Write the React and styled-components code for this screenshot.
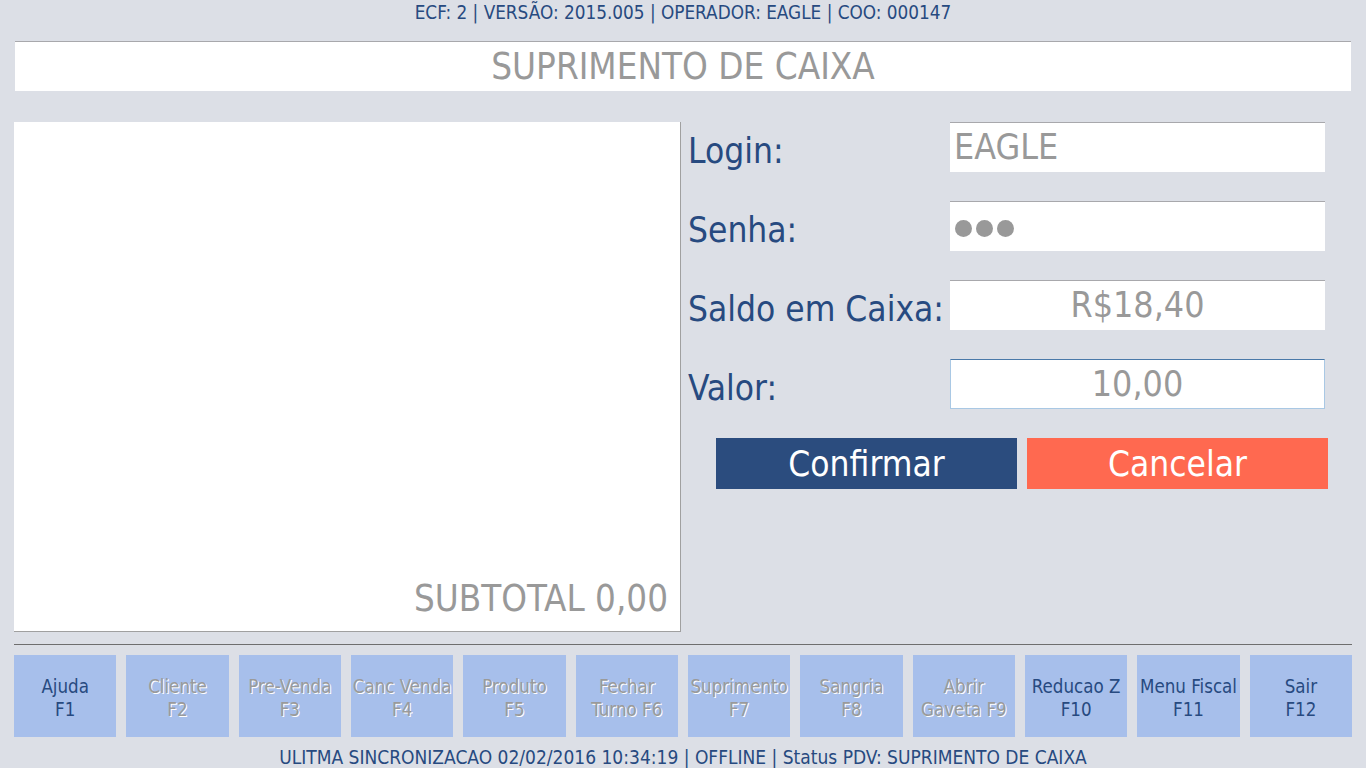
import styled, { createGlobalStyle, css } from "styled-components";

const GlobalStyle = createGlobalStyle`
  html, body {
    margin: 0;
    padding: 0;
    background: #dcdfe6;
  }
  body {
    font-family: "DejaVu Sans Condensed", "DejaVu Sans", sans-serif;
  }
`;

const Page = styled.div`
  width: 1366px;
  height: 768px;
  box-sizing: border-box;
  padding: 0 14px;
  background: #dcdfe6;
  color: #274a80;
  overflow: hidden;
`;

const TopInfo = styled.div`
  height: 27px;
  line-height: 26px;
  text-align: center;
  font-size: 18.8px;
  color: #274a80;
`;

const TitleBox = styled.div`
  margin: 14px 1px 0;
  height: 50px;
  box-sizing: border-box;
  background: #fff;
  border-top: 1px solid #a8a8ac;
  text-align: center;
  line-height: 50px;
  font-size: 36.5px;
  color: #999;
`;

const Main = styled.div`
  margin-top: 31px;
  height: 510px;
  display: grid;
  grid-template-columns: 667px 1fr;
`;

const ItemsPanel = styled.div`
  background: #fff;
  border-right: 1px solid #a0a0a0;
  border-bottom: 1px solid #a0a0a0;
  display: flex;
  align-items: flex-end;
  justify-content: flex-end;
  padding: 0 12px 11px 0;
`;

const Subtotal = styled.div`
  font-size: 36.4px;
  color: #999;
`;

const Form = styled.div`
  padding-left: 7px;
  display: flex;
  flex-direction: column;
  gap: 29px;
`;

const Row = styled.div`
  display: grid;
  grid-template-columns: 262px 375px;
  align-items: center;
  height: 50px;
`;

const Label = styled.div`
  font-size: 35px;
  color: #274a80;
  white-space: nowrap;
  padding-top: 8px;
`;

const Field = styled.div`
  height: 50px;
  box-sizing: border-box;
  background: #fff;
  border-top: 1px solid #a8a8ac;
  font-size: 35.5px;
  color: #999;
  line-height: 48px;
  padding: 0 4px;
  text-align: ${(p) => (p.$center ? "center" : "left")};
  ${(p) =>
    p.$focused &&
    css`
      border: 1px solid #a9c8e4;
      border-top-color: #4a79a9;
    `}
`;

const Dots = styled.span`
  display: inline-flex;
  gap: 4px;
  vertical-align: middle;
  margin-left: 1px;
  span {
    width: 17px;
    height: 17px;
    border-radius: 50%;
    background: #999;
  }
`;

const Actions = styled.div`
  display: flex;
  gap: 10px;
  padding-left: 28px;
`;

const ActionButton = styled.button`
  width: 301px;
  height: 51px;
  border: none;
  font-family: inherit;
  font-size: 35px;
  color: #fff;
  background: ${(p) => (p.$danger ? "#ff6950" : "#2b4c7e")};
  padding: 0;
`;

const Divider = styled.div`
  margin-top: 12px;
  border-top: 1px solid #6e6e6e;
`;

const FnBar = styled.div`
  margin-top: 10px;
  display: grid;
  grid-template-columns: repeat(12, 1fr);
  gap: 10px;
`;

const FnButton = styled.div`
  height: 82px;
  background: #a7bfeb;
  display: flex;
  align-items: center;
  justify-content: center;
  text-align: center;
  font-size: 18.6px;
  line-height: 23px;
  padding-top: 3px;
  box-sizing: border-box;
  white-space: nowrap;
  color: ${(p) => (p.$disabled ? "#9a9a9a" : "#274a80")};
  text-shadow: ${(p) => (p.$disabled ? "1px 1px 0 #fff" : "none")};
`;

const Status = styled.div`
  text-align: center;
  font-size: 19px;
  line-height: 26px;
  margin-top: 7px;
  color: #274a80;
`;

const fnKeys = [
  ["Ajuda", "F1", false],
  ["Cliente", "F2", true],
  ["Pre-Venda", "F3", true],
  ["Canc Venda", "F4", true],
  ["Produto", "F5", true],
  ["Fechar", "Turno F6", true],
  ["Suprimento", "F7", true],
  ["Sangria", "F8", true],
  ["Abrir", "Gaveta F9", true],
  ["Reducao Z", "F10", false],
  ["Menu Fiscal", "F11", false],
  ["Sair", "F12", false],
];

export default function App() {
  return (
    <Page>
      <GlobalStyle />
      <TopInfo>ECF: 2 | VERSÃO: 2015.005 | OPERADOR: EAGLE | COO: 000147</TopInfo>
      <TitleBox>SUPRIMENTO DE CAIXA</TitleBox>
      <Main>
        <ItemsPanel>
          <Subtotal>SUBTOTAL 0,00</Subtotal>
        </ItemsPanel>
        <Form>
          <Row>
            <Label>Login:</Label>
            <Field>EAGLE</Field>
          </Row>
          <Row>
            <Label>Senha:</Label>
            <Field>
              <Dots>
                <span />
                <span />
                <span />
              </Dots>
            </Field>
          </Row>
          <Row>
            <Label>Saldo em Caixa:</Label>
            <Field $center>R$18,40</Field>
          </Row>
          <Row>
            <Label>Valor:</Label>
            <Field $center $focused>10,00</Field>
          </Row>
          <Actions>
            <ActionButton>Confirmar</ActionButton>
            <ActionButton $danger>Cancelar</ActionButton>
          </Actions>
        </Form>
      </Main>
      <Divider />
      <FnBar>
        {fnKeys.map(([line1, line2, disabled]) => (
          <FnButton key={line1} $disabled={disabled}>
            {line1}
            <br />
            {line2}
          </FnButton>
        ))}
      </FnBar>
      <Status>ULITMA SINCRONIZACAO 02/02/2016 10:34:19 | OFFLINE | Status PDV: SUPRIMENTO DE CAIXA</Status>
    </Page>
  );
}
